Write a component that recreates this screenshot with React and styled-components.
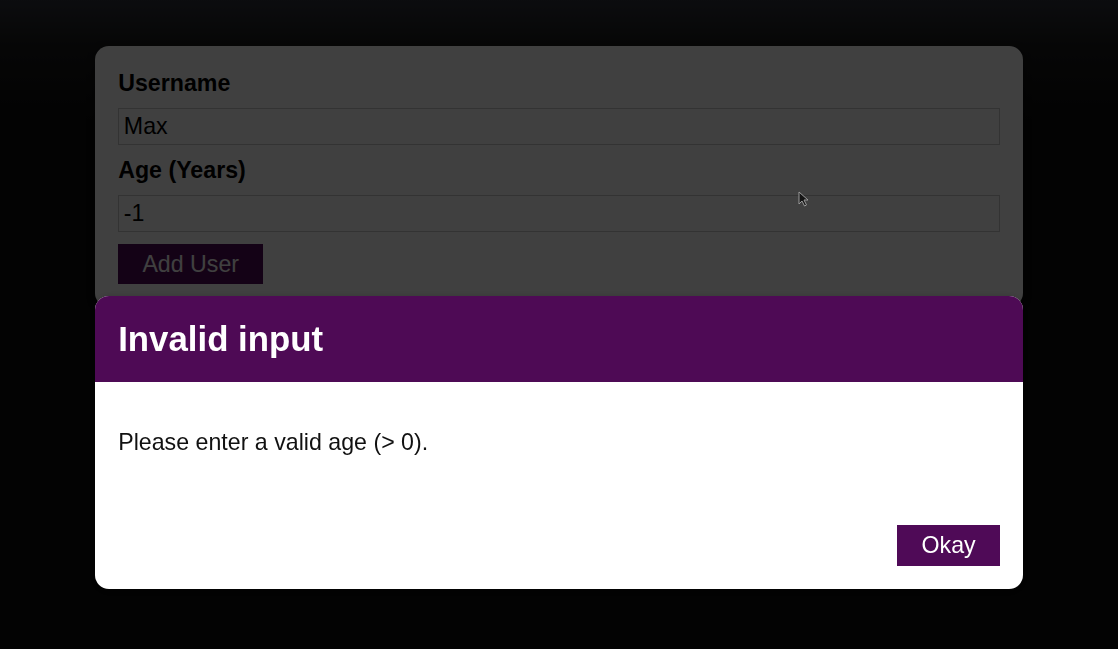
import styled, { createGlobalStyle } from 'styled-components';

const GlobalStyle = createGlobalStyle`
  * {
    box-sizing: border-box;
  }

  html {
    font-family: "Liberation Sans", Arial, sans-serif;
    font-size: 23.2px;
  }

  body {
    margin: 0;
    min-height: 649px;
    background: linear-gradient(to bottom, #30343c 0, #1a1a1b 45px, #0c0c0c 120px, #0c0c0c 100%);
  }
`;

const Card = styled.div`
  background: #fff;
  box-shadow: 0 2px 8px rgba(0, 0, 0, 0.26);
  border-radius: 14px;
`;

const FormCard = styled(Card)`
  margin: 2rem auto;
  padding: 1rem;
  width: 90%;
  max-width: 40rem;
`;

const Label = styled.label`
  display: block;
  font-weight: bold;
  margin-bottom: 0.5rem;
`;

const Input = styled.input`
  font: inherit;
  display: block;
  width: 100%;
  border: 1px solid #ccc;
  padding: 0.17rem 0.2rem;
  margin: 0 0 0.5rem;
  color: #000;
  background: #fff;
  outline: none;
`;

const Button = styled.button`
  font: inherit;
  border: 1px solid #4f0a57;
  background: #4f0a57;
  color: #fff;
  padding: 0.25rem 1rem;
  cursor: pointer;
`;

const Backdrop = styled.div`
  position: fixed;
  top: 0;
  left: 0;
  width: 100%;
  height: 100vh;
  z-index: 10;
  background: rgba(0, 0, 0, 0.75);
`;

const Modal = styled(Card)`
  position: fixed;
  top: 296px;
  left: calc(50% - 20rem);
  width: 40rem;
  z-index: 100;
  overflow: hidden;
`;

const Header = styled.header`
  background: #4e0a55;
  padding: 1rem;

  h2 {
    margin: 0;
    color: #fff;
    font-size: 1.5rem;
  }
`;

const Content = styled.div`
  padding: 1rem;

  p {
    margin: 1rem 0;
    color: #111;
  }
`;

const Actions = styled.footer`
  padding: 1rem;
  display: flex;
  justify-content: flex-end;
`;

// mouse pointer captured in the recording
const Pointer = styled.svg`
  position: fixed;
  top: 191px;
  left: 798px;
  z-index: 200;
`;

export default function App() {
  return (
    <>
      <GlobalStyle />
      <FormCard>
        <form onSubmit={(e) => e.preventDefault()}>
          <Label htmlFor="username">Username</Label>
          <Input id="username" type="text" defaultValue="Max" />
          <Label htmlFor="age">Age (Years)</Label>
          <Input id="age" type="text" defaultValue="-1" />
          <Button type="submit">Add User</Button>
        </form>
      </FormCard>
      <Backdrop />
      <Pointer width="11" height="16" viewBox="0 0 11 16">
        <path d="M1 1 L1 13 L4 10 L6.5 15 L8.5 14 L6 9 L10 9 Z" fill="#151515" stroke="#9a9a9a" strokeWidth="1" strokeLinejoin="round" />
      </Pointer>
      <Modal>
        <Header>
          <h2>Invalid input</h2>
        </Header>
        <Content>
          <p>Please enter a valid age (&gt; 0).</p>
        </Content>
        <Actions>
          <Button type="button">Okay</Button>
        </Actions>
      </Modal>
    </>
  );
}
